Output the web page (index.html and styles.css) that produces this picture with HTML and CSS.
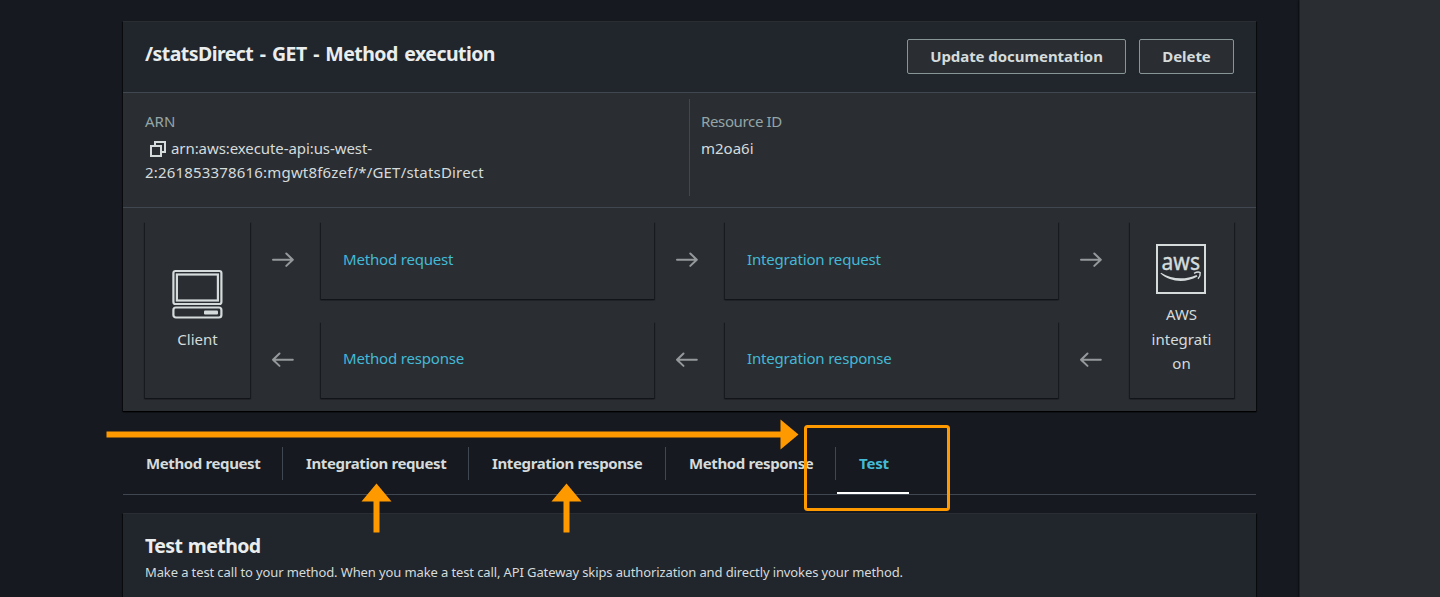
FILE: index.html
```html
<!DOCTYPE html>
<html lang="en">
<head>
<meta charset="utf-8">
<title>API Gateway - Method execution</title>
<link rel="stylesheet" href="styles.css">
</head>
<body>
<svg class="defs" width="0" height="0">
  <symbol id="arrow-right" viewBox="0 0 23 16"><path d="M2 7.700H21.500M15.300 1.500L21.800 7.700L15.300 13.900" fill="none" stroke="currentColor" stroke-width="2" stroke-linecap="round" stroke-linejoin="round"/></symbol>
  <symbol id="arrow-left" viewBox="0 0 23 16"><path d="M21.800 7.700H2M8.500 1.500L2 7.700L8.500 13.900" fill="none" stroke="currentColor" stroke-width="2" stroke-linecap="round" stroke-linejoin="round"/></symbol>
</svg>
<div class="app">
  <main class="main">
    <section class="card">
      <header class="card-header">
        <h1 class="title">/statsDirect - GET - Method execution</h1>
        <div class="actions">
          <button class="btn btn-update">Update documentation</button>
          <button class="btn btn-delete">Delete</button>
        </div>
      </header>
      <div class="details">
        <div class="detail detail-arn">
          <div class="label">ARN</div>
          <div class="value"><svg class="copy" width="16" height="16" viewBox="0 0 16 16" fill="none" stroke="currentColor" stroke-width="2"><path d="M1 5H11V15H1Z"/><path d="M5 5V1H15V11H11"/></svg><span class="arn-1">arn:aws:execute-api:us-west-</span><br><span class="arn-2">2:261853378616:mgwt8f6zef/*/GET/statsDirect</span></div>
        </div>
        <div class="detail detail-id">
          <div class="label resource">Resource ID</div>
          <div class="value">m2oa6i</div>
        </div>
      </div>
      <div class="flow">
        <div class="box endpoint client">
          <svg width="52" height="50" viewBox="0 0 52 50" fill="none" stroke="currentColor"><rect x="1.400" y="2" width="48" height="33" rx="2" stroke-width="2.200"/><rect x="4.900" y="5.500" width="41" height="26" stroke-width="2.200"/><rect x="1.400" y="38.500" width="48" height="10" rx="2.500" stroke-width="2.200"/><rect x="32" y="41.500" width="14" height="4" rx="1" fill="currentColor" stroke="none"/></svg>
          <span>Client</span>
        </div>
        <div class="arrows"><svg><use href="#arrow-right"/></svg><svg><use href="#arrow-left"/></svg></div>
        <div class="stage">
          <a class="box step">Method request</a>
          <a class="box step">Method response</a>
        </div>
        <div class="arrows"><svg><use href="#arrow-right"/></svg><svg><use href="#arrow-left"/></svg></div>
        <div class="stage">
          <a class="box step">Integration request</a>
          <a class="box step">Integration response</a>
        </div>
        <div class="arrows"><svg><use href="#arrow-right"/></svg><svg><use href="#arrow-left"/></svg></div>
        <div class="box endpoint aws">
          <svg width="50" height="50" viewBox="0 0 50 50"><rect x="1" y="1" width="48" height="48" fill="none" stroke="currentColor" stroke-width="2"/><text x="5.500" y="25.500" textLength="38.500" lengthAdjust="spacingAndGlyphs" class="aws-word">aws</text><path d="M5 28.800C16 35.500 29 36 40.500 31L41.500 32.500C29 39.500 14 38 4.500 29.500Z" fill="currentColor"/><path d="M38 29.300C40.500 28 43 27.900 44.200 28.600C44.500 30.500 43.500 33 42 34.800" fill="none" stroke="currentColor" stroke-width="1.400"/></svg>
          <span>AWS<br>integrati<br>on</span>
        </div>
      </div>
    </section>
    <nav class="tabs">
      <a class="tab t1"><span>Method request</span></a>
      <a class="tab t2"><span>Integration request</span></a>
      <a class="tab t3"><span>Integration response</span></a>
      <a class="tab t4"><span>Method response</span></a>
      <a class="tab t5 active"><span>Test</span></a>
    </nav>
    <section class="card test">
      <h2 class="title">Test method</h2>
      <p class="description">Make a test call to your method. When you make a test call, API Gateway skips authorization and directly invokes your method.</p>
    </section>
  </main>
  <aside class="side"></aside>
  <svg class="annotations" width="1440" height="597" viewBox="0 0 1440 597" fill="#ff9900">
    <path d="M106.500 431.500H780.500V419.500L798.500 434.500L780.500 449.500V437.500H106.500Z"/>
    <path d="M376.500 483.500L391.500 501.500H379.500V532.500H373.500V501.500H361.500Z"/>
    <path d="M566.500 483.500L581.500 501.500H569.500V532.500H563.500V501.500H551.500Z"/>
    <rect x="805.500" y="426.500" width="143" height="83" rx="2" fill="none" stroke="#ff9900" stroke-width="3"/>
  </svg>
</div>
</body>
</html>
```
FILE: styles.css
```css
* { box-sizing: border-box; }
body { margin: 0; background: #16191f; color: #d5dbdb; font: 15px/24px "Noto Sans", sans-serif; overflow: hidden; }
.defs { display: none; }
.app { position: relative; display: flex; height: 597px; overflow: hidden; }
.main { flex: none; width: 1299px; padding: 21px 43px 0 123px; background: #16191f; }
.side { flex: 1; background: #2a2e33; border-left: 1px solid #1c2025; box-shadow: 0 0 2px #000; }
.card { background: #2a2e33; border-top: 1px solid #2a2e33; box-shadow: 0 1px 1px #000, 1px 1px 1px #0007, -1px 1px 1px #0007; }
.card-header { display: flex; justify-content: space-between; height: 70px; padding: 17px 22px; background: #21252c; }
.title { margin: 0; color: #eaeded; font-size: 19.500px; line-height: 30px; font-weight: 700; letter-spacing: -.55px; word-spacing: 2px; white-space: nowrap; }
.actions { display: flex; gap: 13px; }
.btn { height: 35px; padding: 0 0 2px; border: 1px solid #879596; border-radius: 2px; background: #2a2e33; color: #d5dbdb; font: 700 15px/24px "Noto Sans", sans-serif; letter-spacing: -.06px; }
.btn-update { width: 219px; }
.btn-delete { width: 95px; }
.details { display: flex; height: 116px; padding: 6px 22px 0; border-top: 1px solid #414750; border-bottom: 1px solid #414750; }
.detail { height: 97px; padding-top: 10px; white-space: nowrap; }
.detail-arn { width: 545px; border-right: 1px solid #414750; }
.detail-id { padding-left: 11px; }
.label { color: #95a5a6; line-height: 24px; margin-bottom: 3px; }
.resource { letter-spacing: -.36px; }
.arn-1 { letter-spacing: -.08px; }
.arn-2 { letter-spacing: .18px; }
.copy { margin: 0 5px 0 5px; vertical-align: -3px; }
.flow { display: flex; height: 203px; padding: 14px 22px 13px; }
.box { background: #2a2e33; box-shadow: 0 1px 1px #121518, 1px 1px 1px #191c20, -1px 1px 1px #191c20; }
.endpoint { width: 105px; display: flex; flex-direction: column; align-items: center; text-align: center; }
.endpoint svg { flex: none; }
.client { padding-top: 47px; gap: 8px; }
.aws { width: 104px; margin-left: 1px; padding: 22px 1px 0 0; gap: 8px; line-height: 24.500px; }
.aws svg { margin-left: -1px; }
.aws-word { font: 24px "Noto Sans", sans-serif; fill: currentColor; stroke: currentColor; stroke-width: .4; }
.arrows { width: 71px; display: flex; flex-direction: column; align-items: center; padding-top: 30px; gap: 84px; color: #95999b; }
.arrows svg { width: 23px; height: 16px; flex: none; margin-right: 6px; }
.stage { width: 333px; display: flex; flex-direction: column; gap: 23px; }
.stage .step { height: 77px; padding: 25px 22px; color: #44b9d6; letter-spacing: -.18px; }
.stage .step + .step { height: 76px; padding-top: 24px; }
.tabs { display: flex; height: 84px; padding-top: 36px; border-bottom: 1px solid #414750; font-weight: 700; letter-spacing: -.38px; white-space: nowrap; }
.tab { height: 33px; padding: 4px 0 0 23px; border-right: 1px solid #414750; }
.t1 { width: 160px; }
.t2 { width: 186px; }
.t3 { width: 197px; }
.t4 { width: 170px; }
.t5 { width: 74px; border: 0; color: #44b9d6; letter-spacing: -.2px; position: relative; }
.active::after { content: ""; position: absolute; left: 1px; top: 45px; width: 72px; height: 2px; background: #fff; }
.test { height: 90px; margin-top: 18px; padding: 17px 22px; background: #21252c; }
.description { margin: 1px 0 0; font-size: 13px; line-height: 20px; letter-spacing: -.115px; white-space: nowrap; }
.test .title { letter-spacing: -.6px; word-spacing: 1px; }
.annotations { position: absolute; left: 0; top: 0; }
```
